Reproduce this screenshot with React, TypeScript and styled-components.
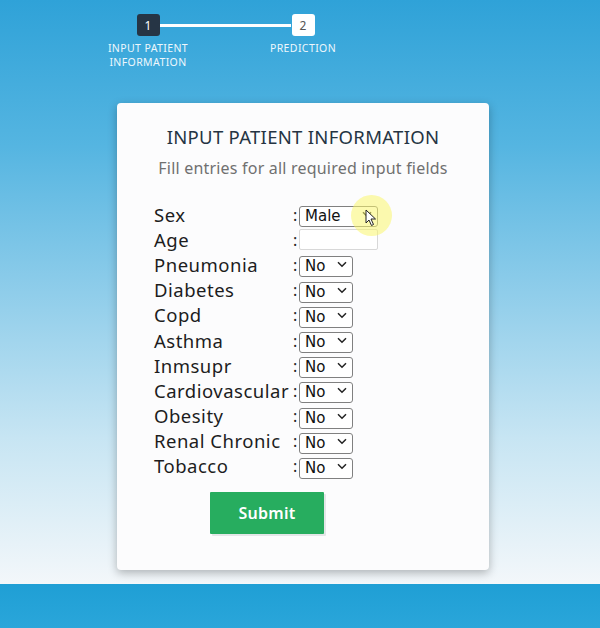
import React from "react";
import styled, { createGlobalStyle } from "styled-components";

const Global = createGlobalStyle`
  html, body { margin: 0; padding: 0; }
  body { font-family: "Noto Sans", "DejaVu Sans", sans-serif; }
  * { box-sizing: border-box; }
`;

const Page = styled.div`
  position: relative;
  height: 628px;
  width: 600px;
  display: flex;
  flex-direction: column;
  overflow: hidden;
`;

const Main = styled.main`
  flex: 1;
  background: linear-gradient(180deg, #2fa2d8 0%, #55b5e1 25%, #8fcdea 50%, #c7e5f3 75%, #f3f7fa 100%);
  display: flex;
  flex-direction: column;
`;

const Footer = styled.footer`
  height: 44px;
  background: linear-gradient(180deg, #1f9fd5 0%, #2aa6da 100%);
`;

const Stepper = styled.div`
  position: relative;
  margin: 14px 0 0 93px;
  width: 265px;
  height: 89px;
  display: flex;
  justify-content: space-between;
`;

const Connector = styled.div`
  position: absolute;
  left: 66px;
  width: 132px;
  top: 10px;
  height: 3px;
  background: #ffffff;
`;

const Step = styled.div`
  position: relative;
  width: 110px;
  display: flex;
  flex-direction: column;
  align-items: center;
`;

const StepBox = styled.div<{ $active?: boolean }>`
  width: 23px;
  height: 22px;
  border-radius: 3px;
  background: ${(p) => (p.$active ? "#263545" : "#ffffff")};
  color: ${(p) => (p.$active ? "#ffffff" : "#555")};
  font-size: 12px;
  display: flex;
  align-items: center;
  justify-content: center;
`;

const StepLabel = styled.div`
  margin-top: 6px;
  font-size: 10.5px;
  line-height: 13.5px;
  color: #eef7fc;
  text-align: center;
  letter-spacing: 0.4px;
`;

const Card = styled.section`
  margin-left: 117px;
  width: 372px;
  height: 467px;
  background: #fcfcfd;
  border-radius: 4px;
  box-shadow: 0 3px 10px rgba(0, 0, 0, 0.28);
  padding: 22px 0 0 37px;
  display: flex;
  flex-direction: column;
`;

const Title = styled.h2`
  margin: 0 0 0 -37px;
  width: 372px;
  text-align: center;
  font-weight: 400;
  font-size: 18.5px;
  color: #253443;
  line-height: 24px;
  letter-spacing: 0.3px;
`;

const Subtitle = styled.p`
  margin: 9px 0 0 -37px;
  width: 372px;
  text-align: center;
  font-size: 16px;
  color: #707070;
  line-height: 20px;
  letter-spacing: 0.2px;
`;

const Form = styled.form`
  margin-top: 24px;
  display: grid;
  grid-template-columns: 139px 6px auto;
  grid-auto-rows: 25.2px;
  align-items: center;
  justify-items: start;
`;

const Label = styled.label`
  font-size: 18.5px;
  color: #1d1d1d;
  white-space: nowrap;
  letter-spacing: 0.5px;
  margin-top: -1px;
`;

const Colon = styled.span`
  font-size: 16px;
  color: #222;
`;

const SelectWrap = styled.div<{ $w: number }>`
  position: relative;
  width: ${(p) => p.$w}px;
  height: 21px;
`;

const Select = styled.select`
  appearance: none;
  -webkit-appearance: none;
  width: 100%;
  height: 100%;
  font-family: "DejaVu Sans", sans-serif;
  font-size: 15px;
  color: #111;
  background: #fff;
  border: 1px solid #808080;
  border-radius: 3px;
  padding: 0 0 0 5px;
  line-height: 19px;
`;

const Chevron = styled.svg`
  position: absolute;
  right: 6px;
  top: 7px;
  pointer-events: none;
`;

const TextInput = styled.input`
  width: 79px;
  height: 21px;
  border: 1px solid #d8d8d8;
  border-radius: 2px;
  background: #fff;
`;

const SubmitRow = styled.div`
  margin-top: 13px;
  padding-left: 56px;
`;

const SubmitButton = styled.button`
  width: 114px;
  height: 42px;
  background: #27ad5f;
  color: #fff;
  border: none;
  border-radius: 1px;
  font-family: "Noto Sans", sans-serif;
  font-weight: 600;
  font-size: 16px;
  letter-spacing: 0.3px;
  box-shadow: 2px 2px 0 #e4e6e8;
`;

const Highlight = styled.div`
  position: absolute;
  left: 351px;
  top: 195px;
  width: 41px;
  height: 41px;
  border-radius: 50%;
  background: rgba(250, 245, 110, 0.55);
  pointer-events: none;
`;

const Cursor = styled.svg`
  position: absolute;
  left: 365px;
  top: 209px;
  pointer-events: none;
`;

type Kind = "sex" | "age" | "yn";

const fields: { label: string; kind: Kind }[] = [
  { label: "Sex", kind: "sex" },
  { label: "Age", kind: "age" },
  { label: "Pneumonia", kind: "yn" },
  { label: "Diabetes", kind: "yn" },
  { label: "Copd", kind: "yn" },
  { label: "Asthma", kind: "yn" },
  { label: "Inmsupr", kind: "yn" },
  { label: "Cardiovascular", kind: "yn" },
  { label: "Obesity", kind: "yn" },
  { label: "Renal Chronic", kind: "yn" },
  { label: "Tobacco", kind: "yn" },
];

function Dropdown({ w, options }: { w: number; options: string[] }) {
  return (
    <SelectWrap $w={w}>
      <Select defaultValue={options[0]}>
        {options.map((o) => (
          <option key={o}>{o}</option>
        ))}
      </Select>
      <Chevron width="10" height="7" viewBox="0 0 10 7">
        <path d="M1 1.2 L5 5.2 L9 1.2" fill="none" stroke="#222" strokeWidth="1.5" />
      </Chevron>
    </SelectWrap>
  );
}

export default function App() {
  return (
    <Page>
      <Global />
      <Main>
        <Stepper>
          <Connector />
          <Step>
            <StepBox $active>1</StepBox>
            <StepLabel>
              INPUT PATIENT
              <br />
              INFORMATION
            </StepLabel>
          </Step>
          <Step>
            <StepBox>2</StepBox>
            <StepLabel>PREDICTION</StepLabel>
          </Step>
        </Stepper>
        <Card>
          <Title>INPUT PATIENT INFORMATION</Title>
          <Subtitle>Fill entries for all required input fields</Subtitle>
          <Form onSubmit={(e) => e.preventDefault()}>
            {fields.map((f) => (
              <React.Fragment key={f.label}>
                <Label>{f.label}</Label>
                <Colon>:</Colon>
                {f.kind === "sex" ? (
                  <Dropdown w={79} options={["Male", "Female"]} />
                ) : f.kind === "age" ? (
                  <TextInput type="text" />
                ) : (
                  <Dropdown w={54} options={["No", "Yes"]} />
                )}
              </React.Fragment>
            ))}
          </Form>
          <SubmitRow>
            <SubmitButton type="button">Submit</SubmitButton>
          </SubmitRow>
        </Card>
      </Main>
      <Footer />
      <Highlight />
      <Cursor width="12" height="18" viewBox="0 0 12 18">
        <path d="M1 1 L1 14 L4 11 L6.5 16.5 L8.5 15.5 L6 10 L10.5 10 Z" fill="#fff" stroke="#222" strokeWidth="1" />
      </Cursor>
    </Page>
  );
}
